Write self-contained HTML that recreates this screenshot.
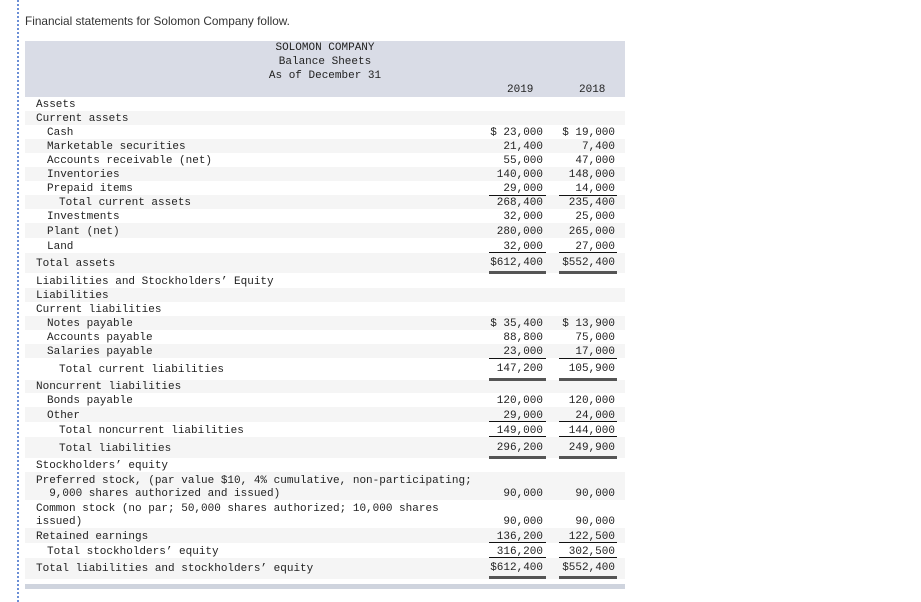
<!DOCTYPE html>
<html><head><meta charset="utf-8"><style>
body{margin:0;width:921px;height:602px;background:#fff;position:relative;overflow:hidden;font-family:"Liberation Mono",monospace;font-size:11px;color:#222}
.dot{position:absolute;left:17px;top:0;height:602px;border-left:2px dotted #6b8fd6}
.intro{position:absolute;left:25px;top:14px;font-family:"Liberation Sans",sans-serif;font-size:11.8px;color:#333}
.hdr{position:absolute;left:25px;top:41px;width:600px;height:56px;background:#d9dce6}
.t{position:absolute;text-align:center;width:200px;left:200px}
.r{position:absolute;left:25px;width:600px}
.g{background:#f5f5f5}
.r .l{position:absolute;left:11px;bottom:-1px;white-space:pre;line-height:13px}
.r .a,.r .b{position:absolute;bottom:-1px;text-align:right;white-space:pre;line-height:13px}
.i1{padding-left:11px}.i2{padding-left:23px}
.a{right:82px}.b{right:10px}
.u{position:absolute;height:1px;background:#111}
.d{position:absolute;height:3px;background:#555}
.bar{position:absolute;left:25px;top:584px;width:600px;height:5px;background:#cfd4de}
</style></head><body>
<div class="dot"></div>
<div class="intro">Financial statements for Solomon Company follow.</div>
<div class="hdr">
<div class="t" style="top:1px">SOLOMON COMPANY</div>
<div class="t" style="top:15px">Balance Sheets</div>
<div class="t" style="top:29px">As of December 31</div>
<div style="position:absolute;left:482px;top:43px">2019</div>
<div style="position:absolute;left:554px;top:43px">2018</div>
</div>

<div class="r" style="top:97px;height:14px"><span class="l">Assets</span></div>
<div class="r g" style="top:111px;height:14px"><span class="l">Current assets</span></div>
<div class="r" style="top:125px;height:14px"><span class="l i1">Cash</span><span class="a">$ 23,000</span><span class="b">$ 19,000</span></div>
<div class="r g" style="top:139px;height:14px"><span class="l i1">Marketable securities</span><span class="a">21,400</span><span class="b">7,400</span></div>
<div class="r" style="top:153px;height:14px"><span class="l i1">Accounts receivable (net)</span><span class="a">55,000</span><span class="b">47,000</span></div>
<div class="r g" style="top:167px;height:14px"><span class="l i1">Inventories</span><span class="a">140,000</span><span class="b">148,000</span></div>
<div class="r" style="top:181px;height:14px"><span class="l i1">Prepaid items</span><span class="a">29,000</span><span class="b">14,000</span></div>
<div class="r g" style="top:195px;height:14px"><span class="l i2">Total current assets</span><span class="a">268,400</span><span class="b">235,400</span></div>
<div class="r" style="top:209px;height:14px"><span class="l i1">Investments</span><span class="a">32,000</span><span class="b">25,000</span></div>
<div class="r g" style="top:223px;height:15px"><span class="l i1">Plant (net)</span><span class="a">280,000</span><span class="b">265,000</span></div>
<div class="r" style="top:238px;height:15px"><span class="l i1">Land</span><span class="a">32,000</span><span class="b">27,000</span></div>
<div class="r g" style="top:253px;height:20px"><span class="l" style="bottom:2px">Total assets</span><span class="a" style="bottom:3px">$612,400</span><span class="b" style="bottom:3px">$552,400</span></div>
<div class="r" style="top:273px;height:15px"><span class="l">Liabilities and Stockholders’ Equity</span></div>
<div class="r g" style="top:288px;height:14px"><span class="l">Liabilities</span></div>
<div class="r" style="top:302px;height:14px"><span class="l">Current liabilities</span></div>
<div class="r g" style="top:316px;height:14px"><span class="l i1">Notes payable</span><span class="a">$ 35,400</span><span class="b">$ 13,900</span></div>
<div class="r" style="top:330px;height:14px"><span class="l i1">Accounts payable</span><span class="a">88,800</span><span class="b">75,000</span></div>
<div class="r g" style="top:344px;height:14px"><span class="l i1">Salaries payable</span><span class="a">23,000</span><span class="b">17,000</span></div>
<div class="r" style="top:358px;height:22px"><span class="l i2" style="bottom:3px">Total current liabilities</span><span class="a" style="bottom:4px">147,200</span><span class="b" style="bottom:4px">105,900</span></div>
<div class="r g" style="top:380px;height:13px"><span class="l">Noncurrent liabilities</span></div>
<div class="r" style="top:393px;height:14px"><span class="l i1">Bonds payable</span><span class="a">120,000</span><span class="b">120,000</span></div>
<div class="r g" style="top:407px;height:15px"><span class="l i1">Other</span><span class="a">29,000</span><span class="b">24,000</span></div>
<div class="r" style="top:422px;height:15px"><span class="l i2">Total noncurrent liabilities</span><span class="a">149,000</span><span class="b">144,000</span></div>
<div class="r g" style="top:437px;height:21px"><span class="l i2" style="bottom:2px">Total liabilities</span><span class="a" style="bottom:3px">296,200</span><span class="b" style="bottom:3px">249,900</span></div>
<div class="r" style="top:458px;height:14px"><span class="l">Stockholders’ equity</span></div>
<div class="r g" style="top:472px;height:28px"><span class="l">Preferred stock, (par value $10, 4% cumulative, non-participating;
  9,000 shares authorized and issued)</span><span class="a">90,000</span><span class="b">90,000</span></div>
<div class="r" style="top:500px;height:28px"><span class="l">Common stock (no par; 50,000 shares authorized; 10,000 shares
issued)</span><span class="a">90,000</span><span class="b">90,000</span></div>
<div class="r g" style="top:528px;height:15px"><span class="l">Retained earnings</span><span class="a">136,200</span><span class="b">122,500</span></div>
<div class="r" style="top:543px;height:15px"><span class="l i1">Total stockholders’ equity</span><span class="a">316,200</span><span class="b">302,500</span></div>
<div class="r g" style="top:558px;height:21px"><span class="l" style="bottom:3px">Total liabilities and stockholders’ equity</span><span class="a" style="bottom:4px">$612,400</span><span class="b" style="bottom:4px">$552,400</span></div>

<div class="u" style="top:195px;left:489px;width:57px"></div><div class="u" style="top:195px;left:559px;width:58px"></div>
<div class="u" style="top:252px;left:489px;width:57px"></div><div class="u" style="top:252px;left:559px;width:58px"></div>
<div class="u" style="top:358px;left:489px;width:57px"></div><div class="u" style="top:358px;left:559px;width:58px"></div>
<div class="u" style="top:421px;left:489px;width:57px"></div><div class="u" style="top:421px;left:559px;width:58px"></div>
<div class="u" style="top:436px;left:489px;width:57px"></div><div class="u" style="top:436px;left:559px;width:58px"></div>
<div class="u" style="top:542px;left:489px;width:57px"></div><div class="u" style="top:542px;left:559px;width:58px"></div>
<div class="u" style="top:557px;left:489px;width:57px"></div><div class="u" style="top:557px;left:559px;width:58px"></div>
<div class="d" style="top:271px;left:489px;width:57px"></div><div class="d" style="top:271px;left:559px;width:58px"></div>
<div class="d" style="top:378px;left:489px;width:57px"></div><div class="d" style="top:378px;left:559px;width:58px"></div>
<div class="d" style="top:456px;left:489px;width:57px"></div><div class="d" style="top:456px;left:559px;width:58px"></div>
<div class="d" style="top:576px;left:489px;width:57px"></div><div class="d" style="top:576px;left:559px;width:58px"></div>
<div class="bar"></div>
</body></html>
